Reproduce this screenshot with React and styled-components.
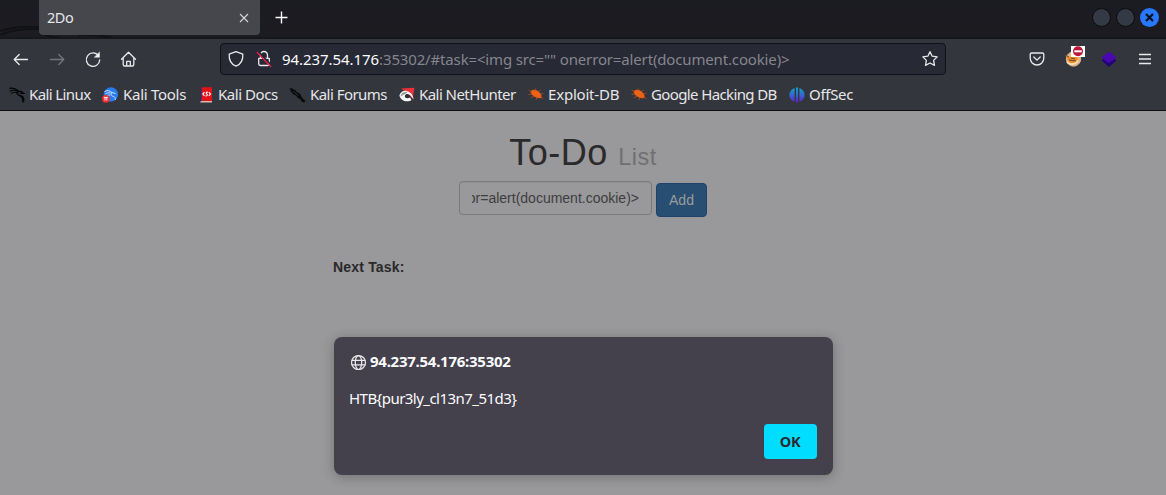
import React from "react";
import styled, { createGlobalStyle } from "styled-components";

const Global = createGlobalStyle`
  * { box-sizing: border-box; }
  html, body { margin: 0; height: 100%; overflow: hidden; background: #99989a; }
  body { font-family: "Noto Sans", sans-serif; }
  svg { display: block; flex: none; }
`;

const Window = styled.div`
  width: 1166px; height: 495px; display: flex; flex-direction: column; position: relative; overflow: hidden;
`;

const TitleBar = styled.div`
  height: 39px; flex: none; display: flex; align-items: flex-start; position: relative;
  background: linear-gradient(#1b1c22, #1c1b20); border-bottom: 2px solid #16171a; padding-left: 39px;
`;
const Wallpaper = styled.svg`
  position: absolute; left: 0; top: 0;
`;
const Tab = styled.div`
  position: relative; width: 221px; height: 35px; display: flex; align-items: center; justify-content: space-between;
  background: #45474d; border-radius: 0 0 4px 4px; padding: 0 11px 0 8px;
`;
const Text = styled.span`
  font-size: ${p => p.$size || 15}px; letter-spacing: ${p => p.$track || 0}px;
  color: ${p => p.$color || "#e6e6e8"}; font-weight: ${p => p.$weight || 400};
  line-height: 20px; padding-bottom: 2px; white-space: pre;
`;
const NewTab = styled.div`
  padding: 11px 0 0 15px;
`;
const WindowButtons = styled.div`
  margin-left: auto; display: flex; gap: 5px; padding: 8px 7px 0 0;
`;
const WindowButton = styled.div`
  width: 19px; height: 19px; border-radius: 50%; display: flex; align-items: center; justify-content: center;
  background: ${p => (p.$close ? "#2777ff" : "#343946")}; border: ${p => (p.$close ? "0" : "1px solid #0a0b0e")};
`;

const NavBar = styled.div`
  height: 40px; flex: none; background: #34363d; display: flex; align-items: center; padding: 0 12px 0 12px;
`;
const NavButtons = styled.div`
  width: 208px; display: flex; gap: 18px;
`;
const UrlField = styled.div`
  width: 726px; height: 32px; background: #272935; border: 1px solid #111218; border-radius: 4px;
  display: flex; align-items: center; padding: 0 6px;
`;
const Security = styled.div`
  width: 45px; display: flex; gap: 10px;
`;
const UrlText = styled.div`
  flex: 1; margin: 2px 0 0 10px; display: flex;
`;
const Actions = styled.div`
  margin-left: auto; display: flex; align-items: center; gap: 18px;
`;
const Extension = styled.div`
  position: relative;
`;
const Blocked = styled.svg`
  position: absolute; left: 7px; top: -4px;
`;

const Bookmarks = styled.div`
  height: 32px; flex: none; background: #34363d; border-bottom: 1px solid #0e0f12; display: flex; align-items: center; padding-left: 9px;
`;
const Bookmark = styled.div`
  width: ${p => p.$width}px; flex: none; display: flex; align-items: center; gap: 4px;
`;

const Page = styled.main`
  flex: 1; background: #99989a; font-family: "Liberation Sans", sans-serif; display: flex; flex-direction: column; align-items: center;
`;
const Heading = styled.h1`
  margin: 22px 0 9px; font-size: 36px; font-weight: 400; line-height: 39px; height: 39px; color: #2a2a2b; white-space: pre; letter-spacing: .5px;
`;
const Small = styled.small`
  font-size: 23.4px; color: #707071;
`;
const Form = styled.div`
  display: flex; gap: 4px; width: 248px;
`;
const Field = styled.div`
  width: 193px; height: 34px; border: 1px solid #7b7a7c; border-radius: 4px; padding: 0 12px; overflow: hidden; box-shadow: inset 0 1px 1px rgba(0,0,0,.07);
`;
const FieldText = styled.div`
  overflow: hidden; display: flex; justify-content: flex-end; font-size: 14px; line-height: 32px; color: #3d3e40; white-space: pre;
`;
const AddButton = styled.button`
  width: 51px; height: 34px; margin: 2px 0 0; padding: 0; background: #284e72; border: 1px solid #1d436b; border-radius: 4px;
  font: 14px/32px "Liberation Sans", sans-serif; color: #9b9b9d;
`;
const NextTask = styled.div`
  width: 500px; margin-top: 40px; font-size: 14px; font-weight: 700; line-height: 20px; color: #29292a; letter-spacing: .18px;
`;

const Dialog = styled.section`
  position: absolute; left: 334px; top: 337px; width: 499px; height: 138px; background: #44414d; border-radius: 8px;
  box-shadow: 0 2px 12px rgba(30,30,36,.32); padding: 15px 16px 16px; display: flex; flex-direction: column;
`;
const DialogTitle = styled.div`
  display: flex; align-items: center; gap: 3px; height: 20px;
`;
const DialogMessage = styled.div`
  margin: 16px 0 0 -1px; height: 20px; display: flex;
`;
const OkButton = styled.button`
  margin: auto 0 0 auto; width: 53px; height: 35px; border: 0; border-radius: 4px; background: #00ddff; padding: 0 1px 2px 0; font-family: inherit;
`;

function Icon({ children, color = "#e9e9eb", size = 18, width = 1.3 }) {
  return (
    <svg width={size} height={size} viewBox="0 0 18 18" fill="none" stroke={color} strokeWidth={width} strokeLinecap="round" strokeLinejoin="round">
      {children}
    </svg>
  );
}

const Dragon = () => (
  <svg width="16" height="16" viewBox="0 0 16 16" fill="none" stroke="#050607" strokeLinecap="round">
    <path d="M.5 1.2C4 .8 7 1.8 9.5 4.2M1 4.1c3-1.3 6-.8 8.3.4M2.5 6.2c2-1 3.8-1.1 5.5-.6" strokeWidth="1.1" />
    <path d="M9 4.3l3 .2 2.6 1.8-3.4.1M8.8 4.5c-1.5 2-.2 3.8 2.5 4.2 2.7.5 3.7 2 3.3 5.1M11.3 9c2 .8 2.8 3.2 2.6 6" strokeWidth="1.4" />
  </svg>
);
const Tools = () => (
  <svg width="17" height="16" viewBox="0 0 17 16">
    <circle cx="8.9" cy="7.5" r="7.2" fill="#287cf0" />
    <path d="M2.5 4.5c3-1.6 5.5-.8 7.5 1l3.5 1M3.5 6.8c2.4-1.5 4.3-1 6-.5-1 2 .5 2.7 2 3.2 1.5.6 2 1.5 1.8 3.3M5 8.7c1.2-.8 2.4-.8 3.3-.4" fill="none" stroke="#cfe2ff" strokeWidth="1" />
    <circle cx="3.9" cy="11.8" r="3.9" fill="#ed2f35" />
    <path d="M1.8 10.4h4M3 10.5v3M4.8 10.5v3" stroke="#fff" strokeWidth=".9" />
  </svg>
);
const Docs = () => (
  <svg width="15" height="16" viewBox="0 0 15 16">
    <path d="M1 .5h2v14H1z" fill="#173568" /><path d="M2.500.200H13v13.800H2.500z" fill="#e21218" />
    <path d="M2 14h11v1.500H1z" fill="#d2b9b4" />
    <path d="M5.500 5.200L3.800 7l1.700 1.800M9.800 5.200L11.500 7 9.800 8.800M8.900 5C6.500 5 7 6.800 7.800 7s1 2-1.400 2" fill="none" stroke="#fff" strokeWidth="1.1" />
  </svg>
);
const Forums = () => (
  <svg width="17" height="16" viewBox="0 0 17 16">
    <path d="M0 1l2 .8L3 .5l1 2 2 .2 1.800 2.200 3.200 1.800 2.200 4.200 3.600 3-1.600.8.500 1.100-3.200-1.300-1-2.200-2.700-1.200L7 8.500 3.500 7 3 5 1 4.400l1-1z" fill="#08090a" />
    <path d="M4 4.300l5.500 4.400" stroke="#45484e" strokeWidth=".6" />
  </svg>
);
const NetHunter = () => (
  <svg width="16" height="16" viewBox="0 0 16 16">
    <path d="M2 1.500L15.500 .8 13.500 12 8.500 6z" fill="#ed3039" />
    <path d="M.4 8.500C1.500 4.500 5.500 2.500 9 4.500c3.500 1.200 4.700 3.600 5.800 8l-2.600-3.200C10.800 6.800 7.500 6 6 8.200c-1 2.300 1.700 4 5 2.400l1.500 2.300C8.500 16 1.500 14 .4 8.500z" fill="#f6f6f6" />
    <path d="M1.500 9.500C1.800 6.500 5 4 8.500 5.500M6.200 8.300c1.800-1.600 3.800-.8 5 1.400l-2 1.300c-1.800.4-3.300-.8-3-2.700z" fill="#26272a" fillOpacity=".45" />
  </svg>
);
const Bug = () => (
  <svg width="16" height="16" viewBox="0 0 16 16">
    <path d="M2.5 4.5c2.3-3 7-1.7 9.3 1.2 2.2 2.3 2.3 5.3.4 5.5-3.6.3-9.5-2.8-9.7-6.7z" fill="#ef6215" />
    <path d="M4 5L.7 3M4 7L.5 7.5M6 9l-3.3 2M9 10l-.8 3M7 4L7.8 1.5M10 5l2.5-2M12 7l3.2-.5M12.5 10l2.8 1.5" stroke="#b94e1d" strokeWidth=".8" />
  </svg>
);
const OffSec = () => (
  <svg width="16" height="16" viewBox="0 0 16 16">
    <defs><linearGradient id="os" x1="0" y1="0" x2="0" y2="1"><stop stopColor="#0aa7c4" /><stop offset=".5" stopColor="#3467cf" /><stop offset="1" stopColor="#6320c3" /></linearGradient></defs>
    <path d="M5.6.9v14C-1.5 12.3-1.5 3.6 5.6.9zM10.4.9v14c7-2.6 7-11.3 0-14zM7 .5h2v15H7z" fill="url(#os)" />
  </svg>
);

const bookmarks = [
  { label: "Kali Linux", icon: <Dragon />, width: 93, track: -0.6 },
  { label: "Kali Tools", icon: <Tools />, width: 97, track: -0.28 },
  { label: "Kali Docs", icon: <Docs />, width: 90, track: -0.46 },
  { label: "Kali Forums", icon: <Forums />, width: 110, track: -0.54 },
  { label: "Kali NetHunter", icon: <NetHunter />, width: 129, track: -0.55 },
  { label: "Exploit-DB", icon: <Bug />, width: 103, track: -0.2 },
  { label: "Google Hacking DB", icon: <Bug />, width: 158, track: -0.62 },
  { label: "OffSec", icon: <OffSec />, width: 80, track: -0.3 },
];

export default function App() {
  return (
    <Window>
      <Global />
      <TitleBar>
        <Wallpaper width="120" height="38" fill="none" stroke="#111216" strokeWidth="2">
          <path d="M0 31c12-4 25-5 39-4M0 35c14-6 28-7 42-6M39 34c8 0 12 4 22 4M78 35c17-1 26 1 35 3" />
        </Wallpaper>
        <Tab>
          <Text $size={14.5} $track={-0.5}>2Do</Text>
          <svg width="10" height="10" viewBox="0 0 10 10" stroke="#d6d6d8" strokeWidth="1.1"><path d="M1 1l8 8M9 1L1 9" /></svg>
        </Tab>
        <NewTab><svg width="13" height="13" viewBox="0 0 13 13" stroke="#fafafa" strokeWidth="1.4"><path d="M6.5.5v12M.5 6.5h12" /></svg></NewTab>
        <WindowButtons>
          <WindowButton /><WindowButton />
          <WindowButton $close><svg width="9" height="9" viewBox="0 0 9 9" stroke="#0b1020" strokeWidth="2.2"><path d="M1 1l7 7M8 1L1 8" /></svg></WindowButton>
        </WindowButtons>
      </TitleBar>
      <NavBar>
        <NavButtons>
          <Icon><path d="M2.2 9.500h13.300M7.200 4.500L2.200 9.500l5 5" /></Icon>
          <Icon color="#74757a"><path d="M2.500 9.500h13.300M10.800 4.500l5 5-5 5" /></Icon>
          <Icon><path d="M14.500 5.800A6.700 6.700 0 1 0 15.700 10" /><path d="M15.500 2.300v5h-5z" fill="#f3f3f4" strokeWidth=".5" /></Icon>
          <Icon><path d="M1.500 9.200L8.500 2.300l7 6.900M3.200 8v6.400c0 1 .6 1.600 1.600 1.600h7.400c1 0 1.600-.6 1.600-1.600V8M6.700 15.800v-4.500h3.600v4.500" /></Icon>
        </NavButtons>
        <UrlField>
          <Security>
            <Icon><path d="M9 1.700l6.800 2.500c.3 5.200-1.700 9.900-6.800 12C3.900 14.100 1.900 9.400 2.200 4.200z" /></Icon>
            <Icon>
              <path d="M5.500 8V5a3.500 3.500 0 0 1 7 0v3M3.700 8.300h10.600v5.500a1.700 1.700 0 0 1-1.700 1.700H5.400a1.700 1.700 0 0 1-1.700-1.700z" />
              <path d="M3.300 1.500l13.500 14" stroke="#272935" strokeWidth="1.800" />
              <path d="M2.200 2.500l13.500 14" stroke="#e6224e" strokeWidth="1.300" />
            </Icon>
          </Security>
          <UrlText>
            <Text $track={-0.06} $color="#fbfbfe">94.237.54.176</Text>
            <Text $track={-0.15} $color="#85868d">{':35302/#task=<img src="" onerror=alert(document.cookie)>'}</Text>
          </UrlText>
          <Icon><path d="M9 1.700l2.200 4.500 5 .7-3.600 3.500.9 4.900L9 13l-4.500 2.300.9-4.900L1.800 6.900l5-.7z" /></Icon>
        </UrlField>
        <Actions>
          <Icon><path d="M3.500 3h11c.8 0 1.300.5 1.300 1.300V8c0 4-3 7-6.800 7s-6.800-3-6.800-7V4.300C2.200 3.500 2.700 3 3.500 3zM5.800 7L9 10.100 12.200 7" /></Icon>
          <Extension>
            <svg width="18" height="18" viewBox="0 0 18 18">
              <circle cx="9.500" cy="9" r="7.200" fill="#efb477" stroke="#c9b7a5" />
              <path d="M1 5l3 2 4-.5L12 4l2 5-3 4H5L3.500 9z" fill="#f18a20" /><path d="M3 12c3 3 8 3 11-1" stroke="#faddb8" strokeWidth="2" fill="none" /><path d="M1 5l4 2M7 8l4 1M5 10l7 1" stroke="#5d4e43" />
            </svg>
            <Blocked width="14" height="11" viewBox="0 0 14 11"><path fill="#fff" d="M0 0h14v11H0z" /><circle cx="7" cy="5.300" r="5" fill="#ba1638" /><path d="M3.300 4.300h7.400v2H3.300z" fill="#fff" /></Blocked>
          </Extension>
          <svg width="18" height="18" viewBox="0 0 18 18"><path d="M1.500 10.500L9 4.500l7.500 6L9 17z" fill="#24027a" /><path d="M1.500 7.500L9 1.500l7.500 6L9 13z" fill="#4b08b1" /></svg>
          <Icon><path d="M3 4.500h12M3 9h12M3 13.500h12" strokeLinecap="butt" /></Icon>
        </Actions>
      </NavBar>
      <Bookmarks>
        {bookmarks.map(b => (
          <Bookmark key={b.label} $width={b.width}>{b.icon}<Text $track={b.track}>{b.label}</Text></Bookmark>
        ))}
      </Bookmarks>
      <Page>
        <Heading>To-Do <Small>List</Small></Heading>
        <Form><Field><FieldText>or=alert(document.cookie)&gt;</FieldText></Field><AddButton>Add</AddButton></Form>
        <NextTask>Next Task:</NextTask>
      </Page>
      <Dialog>
        <DialogTitle>
          <Icon size={17} width={1.3}><circle cx="9" cy="9" r="7.400" /><ellipse cx="9" cy="9" rx="3.400" ry="7.400" /><path d="M2 6.700h14M2 11.500h14" /></Icon>
          <Text $weight={700} $size={15} $color="#fbfbfe" $track={-0.26}>94.237.54.176:35302</Text>
        </DialogTitle>
        <DialogMessage><Text $color="#fbfbfe" $track={-0.54}>{"HTB{pur3ly_cl13n7_51d3}"}</Text></DialogMessage>
        <OkButton><Text $weight={700} $size={14.5} $color="#2b2a33" $track={-0.2}>OK</Text></OkButton>
      </Dialog>
    </Window>
  );
}
